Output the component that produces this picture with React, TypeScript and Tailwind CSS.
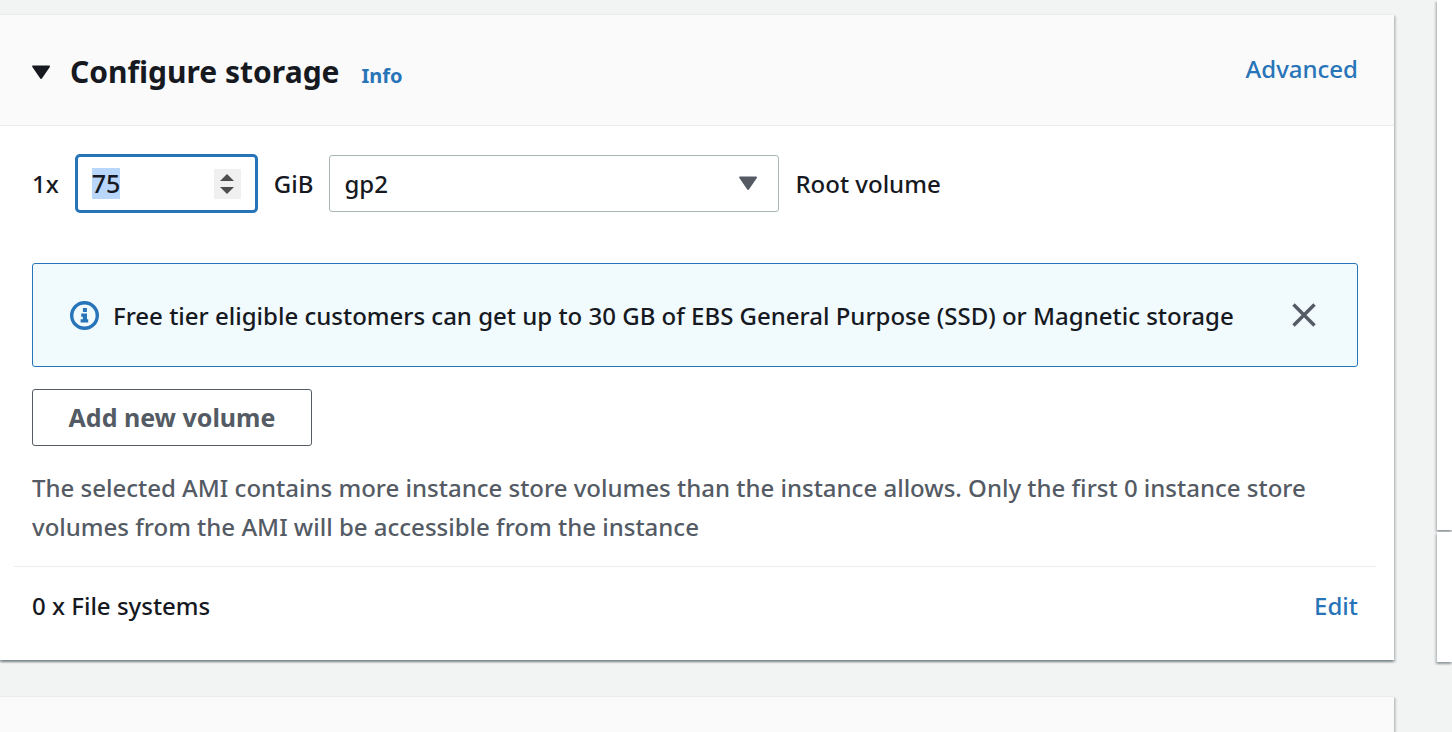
import { useEffect, useRef, useState } from "react";

const cardShadow =
  "border-t border-[#eaeded] shadow-[0_2px_2px_0_rgba(0,28,36,0.3),2px_2px_2px_0_rgba(0,28,36,0.15),-2px_2px_2px_0_rgba(0,28,36,0.15)]";

function CaretDown({ className }: { className: string }) {
  return (
    <svg viewBox="0 0 20 16" className={className} aria-hidden="true">
      <path
        d="M1.2 2.4h15.8L9.1 14z"
        fill="currentColor"
        stroke="currentColor"
        strokeWidth="2"
        strokeLinejoin="round"
      />
    </svg>
  );
}

function InfoIcon() {
  return (
    <svg viewBox="0 0 29 29" className="h-[29px] w-[29px] shrink-0 text-[#2874b8]" aria-hidden="true">
      <circle cx="14.5" cy="14.5" r="12.8" fill="none" stroke="currentColor" strokeWidth="3.4" />
      <path
        d="M12.9 7h4v4h-4zM11.2 12.6h5.8v5.6h1.2v3.4h-7.6v-3.4h2.2v-2.4h-1.6z"
        fill="currentColor"
      />
    </svg>
  );
}

function CloseIcon() {
  return (
    <svg viewBox="0 0 24 24" className="h-6 w-6" aria-hidden="true">
      <path d="M1.5 1.5l21 21M22.5 1.5l-21 21" stroke="currentColor" strokeWidth="3.4" />
    </svg>
  );
}

function SizeInput() {
  const [size, setSize] = useState(75);
  const inputRef = useRef<HTMLInputElement>(null);

  useEffect(() => {
    inputRef.current?.focus();
    inputRef.current?.select();
  }, []);

  return (
    <div className="flex h-[59px] w-[183px] items-center rounded-[5px] border-3 border-[#2874b8] bg-white pr-[14px] pl-[14px]">
      <input
        ref={inputRef}
        id="volume-size"
        type="number"
        value={size}
        onChange={(e) => setSize(Number(e.target.value))}
        className="min-w-0 flex-1 text-[25px] leading-[31px] outline-none selection:bg-[#b9d6fb] selection:text-[#16191f] [&::-webkit-inner-spin-button]:appearance-none"
      />
      <div className="flex h-[30px] w-[27px] flex-col items-center justify-center gap-[6px] bg-[#f0f0f0] text-[#4d4d4d]">
        <button type="button" aria-label="Increase size" onClick={() => setSize(size + 1)}>
          <svg viewBox="0 0 14 7" className="block h-[7px] w-[14px]">
            <path d="M0 7h14L7 0z" fill="currentColor" />
          </svg>
        </button>
        <button type="button" aria-label="Decrease size" onClick={() => setSize(size - 1)}>
          <svg viewBox="0 0 14 7" className="block h-[7px] w-[14px]">
            <path d="M0 0h14L7 7z" fill="currentColor" />
          </svg>
        </button>
      </div>
    </div>
  );
}

function VolumeRow() {
  return (
    <div className="flex items-center gap-4">
      <label htmlFor="volume-size">1x</label>
      <SizeInput />
      <label htmlFor="volume-type">GiB</label>
      <div className="relative w-[450px]">
        <select
          id="volume-type"
          defaultValue="gp2"
          className="h-[57px] w-full appearance-none rounded-[3px] border border-[#aab7b8] bg-white px-[14px] outline-none"
        >
          <option>gp2</option>
          <option>gp3</option>
          <option>io1</option>
          <option>io2</option>
        </select>
        <CaretDown className="pointer-events-none absolute top-5 right-5 h-4 w-5 text-[#545b64]" />
      </div>
      <span>Root volume</span>
    </div>
  );
}

function FreeTierAlert() {
  const [open, setOpen] = useState(true);
  if (!open) return null;

  return (
    <div
      role="status"
      className="mt-[50px] flex min-h-[104px] items-center gap-[14px] rounded-[3px] border border-[#2874b8] bg-[#f1fafd] pr-[41px] pl-[37px]"
    >
      <InfoIcon />
      <p className="flex-1">
        Free tier eligible customers can get up to 30 GB of EBS General Purpose (SSD) or Magnetic storage
      </p>
      <button type="button" aria-label="Dismiss" onClick={() => setOpen(false)} className="text-[#545b64]">
        <CloseIcon />
      </button>
    </div>
  );
}

function StorageCard() {
  return (
    <section className={`bg-white ${cardShadow}`}>
      <header className="flex items-start justify-between border-b border-[#eaeded] bg-[#fafafa] pt-[34px] pr-9 pb-[30px] pl-8">
        <div className="flex items-center">
          <button type="button" aria-label="Collapse section">
            <CaretDown className="h-4 w-5" />
          </button>
          <div className="ml-[18px] flex items-baseline gap-[22px]">
            <h2 className="text-[30px] leading-[46px] font-bold">Configure storage</h2>
            <a href="#info" className="text-[20px] font-bold text-[#2874b8]">
              Info
            </a>
          </div>
        </div>
        <a href="#advanced" className="text-[#2874b8]">
          Advanced
        </a>
      </header>

      <div className="pt-7 pr-9 pb-[35px] pl-8">
        <VolumeRow />
        <FreeTierAlert />
        <button
          type="button"
          className="mt-[22px] h-[57px] w-[280px] rounded-[3px] border border-[#545b64] bg-white text-[25px] font-bold text-[#545b64]"
        >
          Add new volume
        </button>
        <p className="mt-[22px] text-[#545b64]">
          The selected AMI contains more instance store volumes than the instance allows. Only the first 0 instance
          store volumes from the AMI will be accessible from the instance
        </p>
        <hr className="-mx-[18px] mt-5 mb-[19px] border-[#eaeded]" />
        <div className="flex items-center justify-between">
          <span>0 x File systems</span>
          <a href="#edit" className="text-[#2874b8]">
            Edit
          </a>
        </div>
      </div>
    </section>
  );
}

export default function App() {
  return (
    <div className="flex min-h-screen gap-[43px] overflow-hidden bg-[#f2f3f3] font-['Noto_Sans',sans-serif] text-[24px] leading-[39px] font-medium text-[#16191f]">
      <main className="flex min-w-0 flex-1 flex-col gap-9 pt-[14px]">
        <StorageCard />
        <section className={`flex-1 bg-[#fafafa] ${cardShadow}`} />
      </main>
      <aside className="flex w-[15px] flex-col gap-[2px]">
        <div className="h-[530px] bg-white shadow-[0_2px_2px_0_rgba(0,28,36,0.3),-2px_2px_2px_0_rgba(0,28,36,0.15)]" />
        <div className="h-[130px] bg-white shadow-[0_2px_2px_0_rgba(0,28,36,0.3),-2px_2px_2px_0_rgba(0,28,36,0.15)]" />
      </aside>
    </div>
  );
}
